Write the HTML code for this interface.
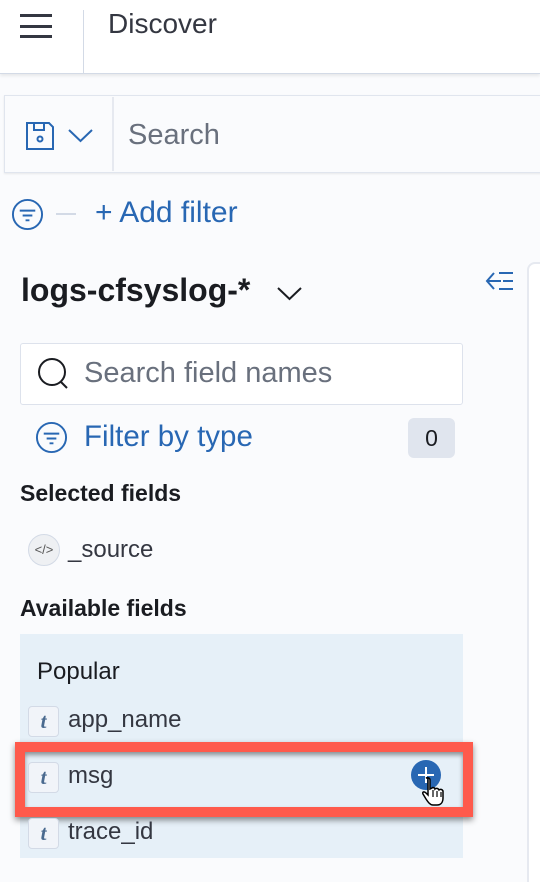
<!DOCTYPE html>
<html><head><style>
*{margin:0;padding:0;box-sizing:border-box}
body{width:540px;height:874px;overflow:hidden;background:#fafbfd;font-family:"Liberation Sans",sans-serif;position:relative;color:#1a1c21}
.a{position:absolute;white-space:nowrap}
.t{width:31px;height:31px;border:1px solid #d3dae6;border-radius:4px;background:#f1f4f9;text-align:center;line-height:29px;font-family:'Liberation Serif',serif;font-style:italic;font-weight:bold;color:#4a6a8f;font-size:21px}
</style></head><body>
<div class="a" style="left:0;top:0;width:540px;height:74px;background:#fff;border-bottom:1px solid #d3dae6;box-shadow:0 2px 3px rgba(0,0,0,.08)"></div>
<div class="a" style="left:20px;top:14px;width:32px;height:3px;background:#343741"></div>
<div class="a" style="left:20px;top:25px;width:32px;height:3px;background:#343741"></div>
<div class="a" style="left:20px;top:35px;width:32px;height:3px;background:#343741"></div>
<div class="a" style="left:83px;top:10px;width:1px;height:64px;background:#d3dae6"></div>
<div class="a" style="left:108px;top:8px;font-size:28px;color:#343741">Discover</div>

<div class="a" style="left:4px;top:95px;width:540px;height:78px;border:1px solid #e0e5ee;background:#fafbfd;box-shadow:0 1px 2px rgba(0,0,0,.08)"></div>
<div class="a" style="left:112px;top:97px;width:2px;height:74px;background:#e6e9f0"></div>
<svg class="a" style="left:25px;top:121px" width="30" height="30" viewBox="0 0 30 30" fill="none" stroke="#2867b3" stroke-width="2"><path d="M2 2h22l4 4v22H2z"/><path d="M9 2v7h10V2"/><circle cx="15" cy="18" r="2.5"/></svg>
<svg class="a" style="left:68px;top:129px" width="25" height="14" viewBox="0 0 25 14" fill="none" stroke="#2867b3" stroke-width="2"><path d="M1 1l11.5 11L24 1"/></svg>
<div class="a" style="left:128px;top:119px;font-size:29px;color:#69707d">Search</div>

<svg class="a" style="left:11px;top:198px" width="33" height="33" viewBox="0 0 34 34" fill="none" stroke="#2867b3" stroke-width="2"><circle cx="17" cy="17" r="15"/><path d="M9 13h16M12 18h10M15 23h4"/></svg>
<div class="a" style="left:56px;top:213px;width:20px;height:2px;background:#d3dae6"></div>
<div class="a" style="left:95px;top:196px;font-size:30px;color:#2867b3">+ Add filter</div>

<div class="a" style="left:21px;top:272px;font-size:32px;font-weight:bold">logs-cfsyslog-*</div>
<svg class="a" style="left:277px;top:287px" width="25" height="14" viewBox="0 0 25 14" fill="none" stroke="#1a1c21" stroke-width="2"><path d="M1 1l11.5 11L24 1"/></svg>
<svg class="a" style="left:485px;top:270px" width="30" height="22" viewBox="0 0 30 22" fill="none" stroke="#2867b3" stroke-width="2"><path d="M9 3L2 11l7 8M2 11h14M14 3h14M18 11h10M14 19h14"/></svg>
<div class="a" style="left:527px;top:262px;width:40px;height:620px;border-left:2px solid #e6e9f0;border-top:2px solid #e6e9f0;border-top-left-radius:8px;background:#fff"></div>

<div class="a" style="left:20px;top:343px;width:443px;height:62px;border:1px solid #dde2ec;border-radius:3px;background:#fff"></div>
<svg class="a" style="left:35px;top:357px" width="36" height="34" viewBox="0 0 36 34" fill="none" stroke="#1a1c21" stroke-width="2"><circle cx="17" cy="15" r="13"/><path d="M26 25l6 6"/></svg>
<div class="a" style="left:84px;top:357px;font-size:29px;color:#69707d">Search field names</div>

<svg class="a" style="left:35px;top:421px" width="33" height="33" viewBox="0 0 34 34" fill="none" stroke="#2867b3" stroke-width="2"><circle cx="17" cy="17" r="15"/><path d="M9 13h16M12 18h10M15 23h4"/></svg>
<div class="a" style="left:84px;top:420px;font-size:29.5px;color:#2867b3">Filter by type</div>
<div class="a" style="left:408px;top:418px;width:47px;height:40px;border-radius:6px;background:#e0e5ee;text-align:center;line-height:40px;font-size:23px">0</div>

<div class="a" style="left:20px;top:480px;font-size:23px;font-weight:bold">Selected fields</div>
<div class="a" style="left:28px;top:534px;width:32px;height:32px;border-radius:50%;background:#eef0f3;border:1px solid #d3dae6;font-size:13px;color:#555;text-align:center;line-height:30px">&lt;/&gt;</div>
<div class="a" style="left:68px;top:536px;font-size:24px;color:#343741">_source</div>

<div class="a" style="left:20px;top:595px;font-size:23px;font-weight:bold">Available fields</div>
<div class="a" style="left:20px;top:634px;width:443px;height:224px;background:#e6f0f8"></div>
<div class="a" style="left:37px;top:658px;font-size:24px">Popular</div>

<div class="a t" style="left:28px;top:706px">t</div>
<div class="a" style="left:68px;top:706px;font-size:24px;color:#343741">app_name</div>

<div class="a" style="left:15px;top:742px;width:458px;height:75px;border:10px solid #fe5a4c;box-shadow:0 3px 6px rgba(0,0,0,.45), inset 0 3px 5px rgba(0,0,0,.4)"></div>
<div class="a t" style="left:28px;top:762px">t</div>
<div class="a" style="left:68px;top:762px;font-size:24px;color:#343741">msg</div>
<div class="a" style="left:411px;top:760px;width:30px;height:30px;border-radius:50%;background:#2867b3"></div>
<div class="a" style="left:418px;top:774px;width:16px;height:2px;background:#fff"></div>
<div class="a" style="left:425px;top:767px;width:2px;height:16px;background:#fff"></div>
<svg class="a" style="left:420px;top:776px" width="32" height="30" viewBox="0 0 32 30"><path d="M6 2c2-1 4 0 4 2v9l2-1c1-1 3 0 3 1c1-1 3-1 4 1c1-1 3-1 4 1v7c0 4-2 7-6 7h-4c-3 0-5-3-7-6l-3-5c-1-2 1-3 3-1l2 2V4c0-1 0-2 0-2z" fill="#fff" stroke="#000" stroke-width="1.5"/><path d="M13 14v7M17 15v6M21 16v5" stroke="#000" stroke-width="1.2"/></svg>

<div class="a t" style="left:28px;top:818px">t</div>
<div class="a" style="left:68px;top:818px;font-size:24px;color:#343741">trace_id</div>
</body></html>
